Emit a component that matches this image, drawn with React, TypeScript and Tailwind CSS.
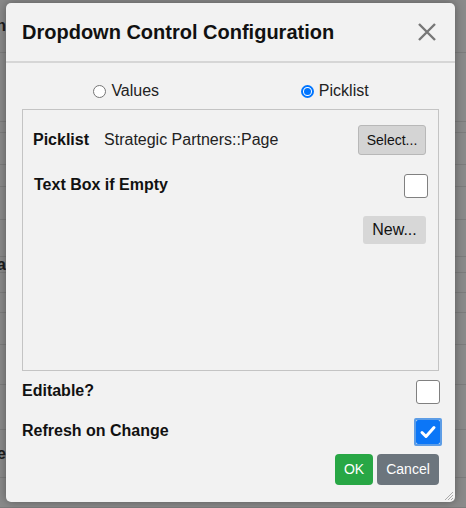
import React from "react";

const font = { fontFamily: '"Liberation Sans", Arial, sans-serif' };

function Check({ checked = false }: { checked?: boolean }) {
  if (checked) {
    return (
      <div className="w-[28px] h-[28px] border-2 border-[#5d9de6] rounded-[2px] flex">
        <div className="flex-1 bg-[#0b76f7] rounded-[2px] flex items-center justify-center">
          <svg width="18" height="18" viewBox="0 0 18 18">
            <path d="M3 9.5 L7 13.5 L15 4.5" fill="none" stroke="white" strokeWidth="3" strokeLinecap="round" strokeLinejoin="round" />
          </svg>
        </div>
      </div>
    );
  }
  return <div className="w-[24px] h-[24px] bg-white border border-[#808080] rounded-[3px]" />;
}

function Radio({ checked, label }: { checked?: boolean; label: string }) {
  return (
    <div className="flex items-center justify-center gap-[5px]">
      {checked ? (
        <div className="w-[13px] h-[13px] rounded-full border-2 border-[#0075ff] bg-white flex items-center justify-center">
          <div className="w-[7px] h-[7px] rounded-full bg-[#0075ff]" />
        </div>
      ) : (
        <div className="w-[13px] h-[13px] rounded-full border border-[#767676] bg-white" />
      )}
      <span className="text-[16px] text-[#222]">{label}</span>
    </div>
  );
}

function Backdrop() {
  // the dimmed page behind the dialog
  const rows = [53, 69, 11, 32, 22, 33, 37, 16, 20, 20, 32, 40, 45, 48, 30];
  return (
    <div className="w-full h-full bg-[#8a8a8a] flex flex-col">
      {rows.map((h, i) => (
        <div key={i} className="border-b border-[#7c7c7c] flex items-center" style={{ height: h }}>
          <div className="w-[6px] flex justify-end overflow-hidden">
            {i === 0 && <span className="font-bold text-[16px] text-[#1c1c1c] whitespace-nowrap">Domain</span>}
            {i === 7 && <span className="font-bold text-[16px] text-[#1c1c1c] whitespace-nowrap">Data</span>}
            {i === 13 && <span className="font-bold text-[16px] text-[#1c1c1c] whitespace-nowrap">Type</span>}
          </div>
        </div>
      ))}
    </div>
  );
}

export default function App() {
  return (
    <div className="relative w-[466px] h-[508px] overflow-hidden" style={font}>
      <Backdrop />
      <div className="absolute left-[6px] top-[3px] w-[449px] h-[499px] bg-[#f2f2f2] rounded-[5px] shadow-[0_0_10px_rgba(0,0,0,0.35)] flex flex-col">
        <div className="h-[60px] flex items-center justify-between pl-[16px] pr-[18px] border-b-2 border-[#d6d6d6]">
          <h1 className="text-[20px] font-bold text-[#111]">Dropdown Control Configuration</h1>
          <svg width="20" height="20" viewBox="0 0 20 20">
            <path d="M2 2 L18 18 M18 2 L2 18" stroke="#777" strokeWidth="2.4" />
          </svg>
        </div>

        <div className="px-4 pt-[16px] flex flex-col">
          <div className="grid grid-cols-2 h-[20px]">
            <Radio label="Values" />
            <Radio label="Picklist" checked />
          </div>

          <div className="mt-[10px] h-[262px] border border-[#c4c4c4] pt-[15px] pl-[10px] pr-[12px] flex flex-col">
            <div className="flex items-center h-[30px]">
              <span className="font-bold text-[16px] text-[#111]">Picklist</span>
              <span className="ml-[15px] text-[16px] text-[#222]">Strategic Partners::Page</span>
              <button className="ml-auto h-[30px] w-[68px] bg-[#d4d4d4] border border-[#b8b8b8] rounded-[3px] text-[14px] text-[#111]">
                Select...
              </button>
            </div>
            <div className="mt-[19px] flex items-start justify-between">
              <span className="-mt-[1px] ml-[1px] font-bold text-[16px] text-[#111]">Text Box if Empty</span>
              <div className="mr-[-2px]">
                <Check />
              </div>
            </div>
            <div className="mt-[18px] flex justify-end">
              <button className="h-[28px] w-[63px] bg-[#d7d7d7] rounded-[3px] text-[16px] text-[#111]">New...</button>
            </div>
          </div>

          <div className="mt-[9px] flex items-center justify-between h-[24px]">
            <span className="font-bold text-[16px] text-[#111] -mt-[2px]">Editable?</span>
            <div className="mr-[-1px]">
              <Check />
            </div>
          </div>

          <div className="mt-[14px] flex items-center justify-between h-[28px]">
            <span className="font-bold text-[16px] text-[#111] -mt-[3px]">Refresh on Change</span>
            <div className="mr-[-3px]">
              <Check checked />
            </div>
          </div>

          <div className="mt-[8px] flex justify-end gap-[4px]">
            <button className="h-[31px] w-[38px] bg-[#28a745] rounded-[4px] text-[14px] text-white">OK</button>
            <button className="h-[31px] w-[62px] bg-[#6c757d] rounded-[4px] text-[14px] text-white">Cancel</button>
          </div>
        </div>

        <svg className="absolute right-[1px] bottom-[1px]" width="12" height="12" viewBox="0 0 12 12">
          <path d="M11 3 L3 11 M11 6 L6 11 M11 9 L9 11" stroke="#aaa" strokeWidth="1" />
        </svg>
      </div>
    </div>
  );
}
